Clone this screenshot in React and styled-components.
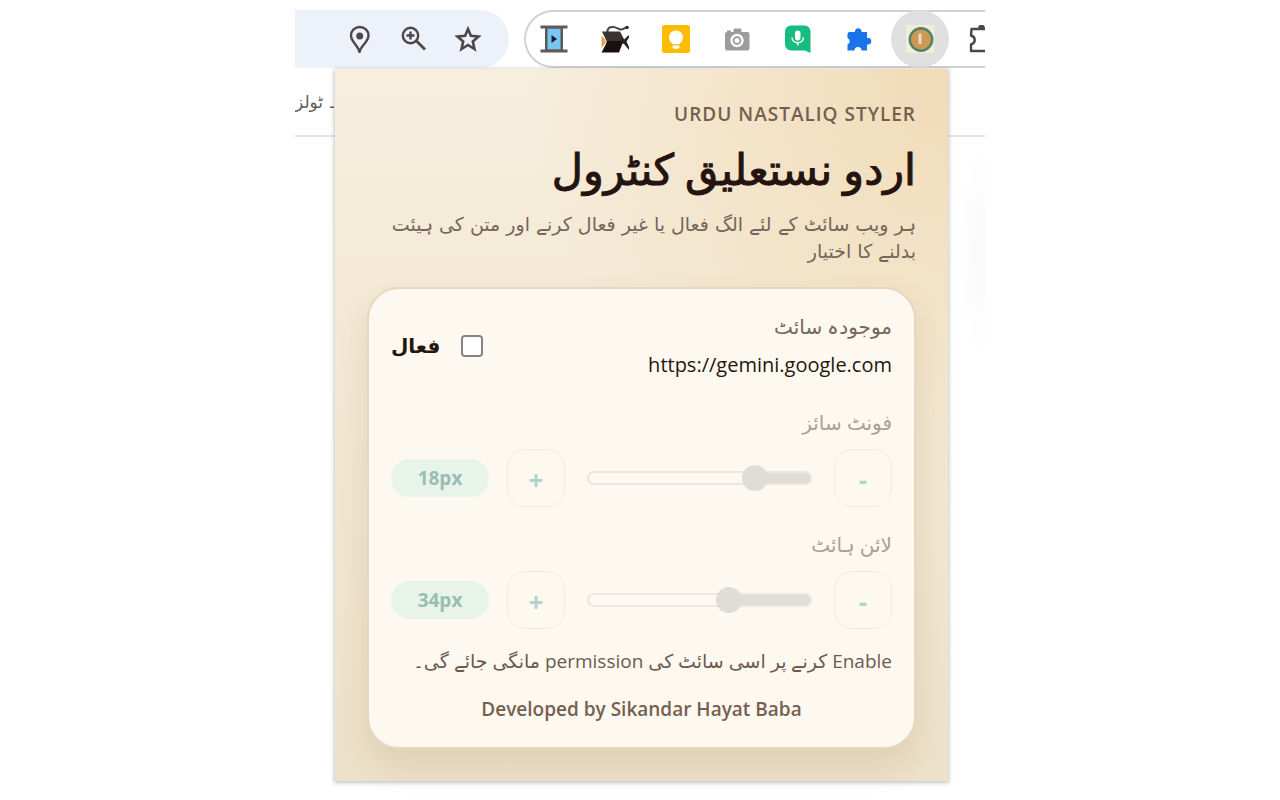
import { useState } from 'react';
import styled, { createGlobalStyle } from 'styled-components';

const EXTENSIONS = [
  { name: 'Video reel', icon: ReelIcon },
  { name: 'Black fish', icon: FishIcon },
  { name: 'Keep', icon: BulbIcon },
  { name: 'Screenshot', icon: CameraIcon },
  { name: 'Voice typing', icon: MicIcon },
  { name: 'Blue puzzle', icon: PuzzleIcon },
  { name: 'Urdu Nastaliq Styler', icon: StylerIcon, active: true },
  { name: 'Extensions', icon: ExtensionsIcon },
];

const App = () => {
  const [enabled, setEnabled] = useState(false);
  const [fontSize, setFontSize] = useState(18);
  const [lineHeight, setLineHeight] = useState(34);

  return (
    <Browser>
      <GlobalStyle />
      <Toolbar>
        <AddressEnd>
          <ToolButton aria-label="Location">
            <PinIcon />
          </ToolButton>
          <ToolButton aria-label="Zoom">
            <ZoomIcon />
          </ToolButton>
          <ToolButton aria-label="Bookmark">
            <StarIcon />
          </ToolButton>
        </AddressEnd>
        <ExtensionBar>
          {EXTENSIONS.map(({ name, icon: Icon, active }) => (
            <ExtensionButton key={name} aria-label={name} $active={active}>
              <Icon />
            </ExtensionButton>
          ))}
        </ExtensionBar>
      </Toolbar>
      <Viewport>
        <Page>
          <PageNav>۔ ٹولز</PageNav>
          <PageBody />
        </Page>
        <Popup dir="rtl" lang="ur">
          <header>
            <Eyebrow>URDU NASTALIQ STYLER</Eyebrow>
            <Title>اردو نستعلیق کنٹرول</Title>
            <Subtitle>
              ہر ویب سائٹ کے لئے الگ فعال یا غیر فعال کرنے اور متن کی ہیئت بدلنے
              کا اختیار
            </Subtitle>
          </header>
          <Card>
            <SiteRow>
              <div>
                <SiteLabel>موجودہ سائٹ</SiteLabel>
                <SiteUrl dir="ltr">https://gemini.google.com</SiteUrl>
              </div>
              <Toggle>
                <Checkbox
                  type="checkbox"
                  checked={enabled}
                  onChange={(e) => setEnabled(e.target.checked)}
                />
                <span>فعال</span>
              </Toggle>
            </SiteRow>
            <Control
              id="font-size"
              label="فونٹ سائز"
              min={12}
              max={40}
              value={fontSize}
              onChange={setFontSize}
              disabled={!enabled}
            />
            <Control
              id="line-height"
              label="لائن ہائٹ"
              min={20}
              max={60}
              value={lineHeight}
              onChange={setLineHeight}
              disabled={!enabled}
            />
            <Hint>Enable کرنے پر اسی سائٹ کی permission مانگی جائے گی۔</Hint>
            <Credit dir="ltr">Developed by Sikandar Hayat Baba</Credit>
          </Card>
        </Popup>
      </Viewport>
    </Browser>
  );
};

export default App;

const Control = ({ id, label, min, max, value, onChange, disabled }) => {
  const fill = ((value - min) / (max - min)) * 100;
  return (
    <ControlGroup $disabled={disabled}>
      <ControlLabel htmlFor={id}>{label}</ControlLabel>
      <ControlRow>
        <StepButton
          aria-label={`${label} -`}
          disabled={disabled}
          onClick={() => onChange(Math.max(min, value - 1))}
        >
          -
        </StepButton>
        <Range
          id={id}
          type="range"
          min={min}
          max={max}
          value={value}
          disabled={disabled}
          onChange={(e) => onChange(Number(e.target.value))}
          style={{ '--fill': `${fill}%` }}
        />
        <StepButton
          aria-label={`${label} +`}
          disabled={disabled}
          onClick={() => onChange(Math.min(max, value + 1))}
        >
          +
        </StepButton>
        <Value dir="ltr" htmlFor={id}>
          {value}px
        </Value>
      </ControlRow>
    </ControlGroup>
  );
};

function PinIcon() {
  return (
    <svg width="28" height="28" viewBox="0 0 28 28" fill="none">
      <path
        d="M13.500 27C12.500 21 5 17 5 10.500A8.700 8.500 0 0 1 22.500 10.500C22.500 17 14.500 21 13.500 27Z"
        stroke="#4d4749"
        strokeWidth="2.4"
        strokeLinejoin="round"
      />
      <circle cx="13.700" cy="11" r="3.500" fill="#4d4749" />
    </svg>
  );
}

function ZoomIcon() {
  return (
    <svg width="28" height="28" viewBox="0 0 28 28" fill="none" stroke="#4d4749">
      <circle cx="10.500" cy="10.500" r="7.700" strokeWidth="2.400" />
      <path d="M16 15.500L25 24.500" strokeWidth="2.800" />
      <path d="M10.500 6.500V14.500M6.500 10.500H14.500" strokeWidth="2.400" />
    </svg>
  );
}

function StarIcon() {
  return (
    <svg width="28" height="28" viewBox="0 0 28 28" fill="none">
      <path
        d="M14 4L16.900 10.800L24.500 11.500L18.800 16.400L20.500 24L14 20L7.500 24L9.200 16.400L3.500 11.500L11.100 10.800Z"
        stroke="#4d4749"
        strokeWidth="2.600"
      />
    </svg>
  );
}

function ReelIcon() {
  return (
    <svg width="28" height="28" viewBox="0 0 28 28">
      <path d="M5 2H23V26H5Z" fill="#5c5859" />
      <path d="M7.500 3.500H20.500V24.500H7.500Z" fill="#77c6f3" />
      <path d="M0.500 0.500H27.500V3.500H0.500ZM0.500 24.500H27.500V27.500H0.500Z" fill="#605a5b" />
      <path d="M11.500 10V18L17 14Z" fill="#211b1c" />
    </svg>
  );
}

function FishIcon() {
  return (
    <svg width="28" height="28" viewBox="0 0 28 28">
      <path
        d="M6.500 8C6 3 8.500 2 12 2C16 2 17 4.500 20 4.500C23 4.500 24 2 27 2.500"
        fill="none"
        stroke="#4a4243"
        strokeWidth="2"
      />
      <circle cx="26" cy="2.500" r="1.800" fill="#332c2e" />
      <path d="M1 6.500H19L23 14L21 17H6Z" fill="#3b3233" />
      <path d="M6 16H22.500L18 27.500H0.500L4.500 20Z" fill="#1b100f" />
      <path d="M20 13L23 14.500L28 10V12.500L25.500 16.500L28 22V25L23 19L20 18Z" fill="#2a2021" />
      <path d="M0.500 11C4 13 5 16 4.500 18L0.500 23Z" fill="#e3a14f" />
    </svg>
  );
}

function BulbIcon() {
  return (
    <svg width="28" height="28" viewBox="0 0 28 28">
      <rect width="28" height="28" rx="2.500" fill="#fcbb04" />
      <circle cx="14" cy="12.500" r="7" fill="#fff" />
      <path d="M10 16H18V19H10ZM10.500 20.500H17.500V22A3.500 2 0 0 1 10.500 22Z" fill="#fff" />
    </svg>
  );
}

function CameraIcon() {
  return (
    <svg width="28" height="28" viewBox="0 0 28 28">
      <path
        d="M4 7V5.500H8V7H10.500V5A1.500 1.500 0 0 1 12 3.500H17A1.500 1.500 0 0 1 18.500 5V7H24.500A2 2 0 0 1 26.500 9V23.500A2 2 0 0 1 24.500 25.500H4A2 2 0 0 1 2 23.500V9A2 2 0 0 1 4 7Z"
        fill="#9c9c9c"
      />
      <circle cx="14" cy="15.500" r="5.500" fill="#999" stroke="#fff" strokeWidth="2.400" />
      <circle cx="14" cy="15.500" r="2.500" fill="#fff" />
    </svg>
  );
}

function MicIcon() {
  return (
    <svg width="28" height="28" viewBox="0 0 28 28">
      <path
        d="M7 0.500H20A6 6 0 0 1 26.500 7V28L21 25.500H7A6 6 0 0 1 1 19.500V6.500A6 6 0 0 1 7 0.500Z"
        fill="#17bd80"
      />
      <rect x="11" y="5.500" width="5.500" height="10" rx="2.700" fill="#fff" />
      <path
        d="M8 12.500C8.500 19.500 19 19.500 19.500 12.500M13.700 17.500V20.500"
        fill="none"
        stroke="#fff"
        strokeWidth="1.500"
      />
    </svg>
  );
}

function PuzzleIcon() {
  return (
    <svg width="28" height="28" viewBox="0 0 28 28">
      <path
        d="M4.500 7H10V6A3.300 3.300 0 0 1 16.500 6V7H22V13H23A3 3 0 0 1 23 19.500H22V25.500H16.500A3.500 3.500 0 0 0 9.500 25.500H2.500V19.500A3.500 3.500 0 0 0 2.500 13V9A2 2 0 0 1 4.500 7Z"
        fill="#1a73e8"
      />
    </svg>
  );
}

function StylerIcon() {
  return (
    <svg width="28" height="28" viewBox="0 0 28 28">
      <rect width="28" height="28" fill="#f3ebdc" />
      <circle cx="15" cy="14.500" r="11.200" fill="#cc9853" stroke="#4e8463" strokeWidth="2.400" />
      <path d="M12.500 8.500H15.500V19H12.500Z" fill="#eadcc1" />
    </svg>
  );
}

function ExtensionsIcon() {
  return (
    <svg width="28" height="28" viewBox="0 0 28 28" fill="none">
      <path
        d="M4.500 4H24V26H4V19.500C9 18 9 12 4 10.500Z"
        stroke="#4d4749"
        strokeWidth="2.400"
        strokeLinejoin="round"
      />
      <path d="M11 4A3.500 4.500 0 0 1 18 4Z" fill="#4d4749" />
    </svg>
  );
}

const GlobalStyle = createGlobalStyle`
  * {
    box-sizing: border-box;
  }
  body {
    margin: 0;
    background-color: #fff;
    color: #24160f;
    font-family: 'Open Sans', 'DejaVu Sans', sans-serif;
  }
  button, input {
    font-family: inherit;
  }
`;

const Browser = styled.div`
  width: 100%;
  max-width: 690px;
  margin: 0 auto;
  padding-top: 10px;
  overflow: hidden;
`;

const Toolbar = styled.div`
  display: flex;
  gap: 15px;
  height: 58px;
`;

const AddressEnd = styled.div`
  flex: none;
  width: 214px;
  display: flex;
  justify-content: flex-end;
  align-items: center;
  padding-right: 14px;
  background-color: #edf1fa;
  border-radius: 0 29px 29px 0;
`;

const ToolButton = styled.button`
  width: 54px;
  height: 54px;
  display: grid;
  place-items: center;
  padding: 0;
  border: none;
  background: none;
`;

const ExtensionBar = styled.div`
  flex: none;
  display: flex;
  gap: 3px;
  padding-left: 1px;
  border-radius: 29px 0 0 29px;
  box-shadow: inset 0 0 0 2px #d1d1d1;
`;

const ExtensionButton = styled.button`
  width: 58px;
  height: 58px;
  display: grid;
  place-items: center;
  padding: 0;
  border: none;
  border-radius: 50%;
  background-color: ${(props) => (props.$active ? '#e0e0e0' : 'transparent')};
`;

/* the popup is stacked on the page in one grid cell */
const Viewport = styled.div`
  display: grid;
  grid-template-columns: 100%;
  padding-bottom: 20px;

  & > * {
    grid-area: 1 / 1;
  }
`;

const Page = styled.div`
  display: flex;
  flex-direction: column;
`;

const PageNav = styled.div`
  display: flex;
  align-items: center;
  height: 69px;
  border-bottom: 2px solid #e4e6e6;
  color: #5d5d60;
  font-size: 17px;
  white-space: nowrap;
`;

const PageBody = styled.div`
  flex: 1;
  background: radial-gradient(
    ellipse 28px 110px at 100% 115px,
    #f7f8f9,
    #ffffff
  );
`;

const Popup = styled.main`
  margin: 1px 37px 0 40px;
  padding: 32px;
  background: radial-gradient(
      circle at top right,
      rgba(240, 217, 179, 0.9),
      rgba(240, 217, 179, 0) 45%
    ),
    linear-gradient(180deg, #f7eedd, #ede1c9);
  box-shadow: 0 1px 4px 1px rgba(60, 64, 67, 0.3);
`;

const Eyebrow = styled.p`
  margin: 0;
  color: #75604f;
  font-size: 19px;
  line-height: 26px;
  font-weight: 600;
  letter-spacing: 1px;
`;

const Title = styled.h1`
  margin: 12px 0;
  color: #24130f;
  font-size: 43px;
  line-height: 60px;
  font-weight: 400;
  -webkit-text-stroke: 1px #24130f;
`;

const Subtitle = styled.p`
  margin: 0;
  color: #75655a;
  font-family: 'DejaVu Sans', sans-serif;
  font-size: 19px;
  line-height: 27px;
`;

const Card = styled.section`
  margin-top: 22px;
  padding: 22px;
  background-color: #fef9f0;
  border: 2px solid #e7d8bd;
  border-radius: 32px;
  box-shadow: 0 16px 32px rgba(130, 90, 40, 0.14);
`;

const SiteRow = styled.div`
  display: flex;
  justify-content: space-between;
  align-items: center;
`;

const SiteLabel = styled.div`
  color: #75655a;
  font-size: 20px;
  line-height: 32px;
`;

const SiteUrl = styled.div`
  margin-top: 6px;
  font-size: 20px;
  line-height: 32px;
`;

const Toggle = styled.label`
  display: flex;
  align-items: center;
  gap: 21px;
  font-size: 20px;
  line-height: 32px;
  font-weight: 600;
`;

const Checkbox = styled.input`
  appearance: none;
  width: 22px;
  height: 22px;
  margin: 0;
  border: 2px solid #85828a;
  border-radius: 4px;
  background-color: #fff;

  &:checked {
    border-color: #1b7a77;
    background-color: #1b7a77;
  }
`;

const ControlGroup = styled.div`
  margin-top: 26px;
  opacity: ${(props) => (props.$disabled ? 0.6 : 1)};

  & + & {
    margin-top: 22px;
  }
`;

const ControlLabel = styled.label`
  display: block;
  margin-bottom: 10px;
  color: #75655a;
  font-size: 20px;
  line-height: 32px;
`;

const ControlRow = styled.div`
  display: grid;
  grid-template-columns: 58px 1fr 58px 98px;
  align-items: center;
  gap: 18px;
`;

const StepButton = styled.button`
  height: 58px;
  padding: 4px 0 0;
  border: 1px solid #efe4cb;
  border-radius: 18px;
  background-color: #fffaee;
  color: #1b7a77;
  font-size: 26px;
  line-height: 32px;
  font-weight: 700;

  &:disabled {
    color: #80b9b9;
  }
`;

const Range = styled.input`
  appearance: none;
  width: auto;
  min-width: 0;
  height: 26px;
  margin: 0 4px;
  background: none;

  &::-webkit-slider-runnable-track {
    height: 14px;
    border: 2px solid #dddad4;
    border-radius: 7px;
    background: linear-gradient(
      to left,
      #cbcbc9 var(--fill),
      #fdf8f1 var(--fill)
    );
  }

  &::-webkit-slider-thumb {
    appearance: none;
    width: 26px;
    height: 26px;
    margin-top: -8px;
    border-radius: 50%;
    background-color: #cbcbc9;
  }
`;

const Value = styled.output`
  padding: 3px 0;
  border-radius: 20px;
  background-color: #daf0e7;
  color: #57958c;
  font-size: 19px;
  line-height: 32px;
  font-weight: 700;
  text-align: center;
`;

const Hint = styled.p`
  margin: 16px 0 0;
  color: #6c5a4e;
  font-size: 19px;
  line-height: 32px;
`;

const Credit = styled.p`
  margin: 16px 0 0;
  color: #75604f;
  font-size: 19px;
  line-height: 32px;
  font-weight: 600;
  text-align: center;
`;
